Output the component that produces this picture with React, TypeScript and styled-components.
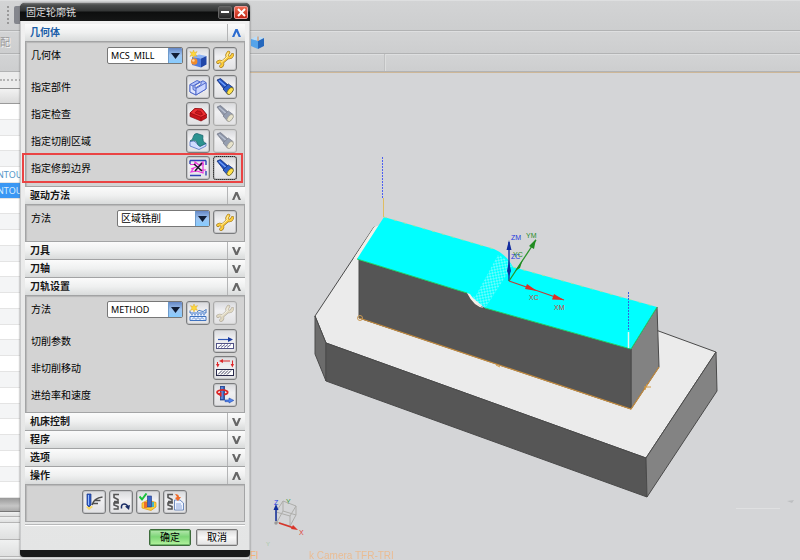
import React, { useId, useState } from "react";
import styled, { createGlobalStyle, css } from "styled-components";

const GlobalStyle = createGlobalStyle`
  * { box-sizing: border-box; }
  body {
    margin: 0;
    overflow: hidden;
    background: #d4d5d7;
    font-family: "Noto Sans", "Noto Sans CJK SC", sans-serif;
    font-size: 10px;
    line-height: 16px;
    color: #000;
  }
  button, select { font: inherit; color: inherit; margin: 0; padding: 0; }
`;

/* ---------- Application window behind the dialog ---------- */

const Page = styled.div`
  position: relative;
  display: flex;
  flex-direction: column;
  min-height: 100vh;
`;

const ToolbarRow = styled.div<{ $height: number }>`
  display: flex;
  align-items: center;
  height: ${(p) => p.$height}px;
  border-bottom: 1px solid #b2b3b4;
  background: linear-gradient(#d3d4d5, #cdcecf);
  box-shadow: inset 0 1px #dedfe0;
`;

const Grip = styled.span`
  width: 4px;
  height: 18px;
  margin: 0 3px 0 7px;
  border-left: 2px dotted #999;
`;

const DarkTool = styled.span`
  width: 18px;
  height: 18px;
  background: #84868d;
  border-radius: 2px;
`;

const FadedText = styled.span`
  width: 250px;
  color: #999;
  text-shadow: 1px 1px #f5f5f5;
`;

const RowDivider = styled.span`
  width: 1px;
  height: 17px;
  margin-left: 384px;
  background: #c0c1c2;
  box-shadow: 1px 0 #dcdddd;
`;

const Workspace = styled.div`
  display: flex;
  flex: 1;
`;

const Navigator = styled.aside`
  display: flex;
  flex-direction: column;
  width: 250px;
  background: #eceded;
  border-right: 1px solid #b5b6b8;
`;

const NavGrip = styled.div`
  height: 17px;
  border-bottom: 1px solid #8f8f8f;
  background: #ececec;
  &::before {
    content: "";
    display: block;
    margin-top: 7px;
    border-top: 2px dotted #b4b4b4;
  }
`;

const NavHead = styled.div`
  height: 15px;
  border-bottom: 1px solid #9a9a9a;
  background: linear-gradient(#f2f2f2, #dadada);
`;

const NavList = styled.ul`
  display: flex;
  flex: 1;
  flex-direction: column;
  margin: 0;
  padding: 0;
  list-style: none;
`;

const NavItem = styled.li<{ $selected: boolean }>`
  flex: 1;
  overflow: hidden;
  border-bottom: 1px solid #e4e4e4;
  background: #fff;
  color: #5597c8;
  font-size: 9px;
  text-indent: -3px;
  &:nth-child(even) { background: #f4f5f6; }
  ${(p) => p.$selected && css`
    && { background: #3a97f4; color: #d9edff; }
  `}
`;

const NavScroll = styled.div`
  height: 14px;
  border-bottom: 1px solid #777;
  background: linear-gradient(#999, #c6c6c6 60%, #aaa);
`;

const NavStrip = styled.div<{ $height: number }>`
  height: ${(p) => p.$height}px;
  border-bottom: 1px solid #b5b5b5;
  background: linear-gradient(#f0f1f1, #dfe0e0);
`;

const Viewport = styled.main`
  flex: 1;
  min-width: 0;
  overflow: hidden;
  background: #d4d5d7;
  border-top: 1px solid #cdb798;
`;

const SceneSvg = styled.svg`
  display: block;
  width: 550px;
  height: 487px;
`;

/* ---------- Dialog ---------- */

const Dialog = styled.section`
  position: absolute;
  left: 20px;
  top: 3px;
  width: 230px;
  border-radius: 5px 5px 4px 4px;
  background: #191a1a;
  box-shadow: 0 0 2px #666;
  overflow: hidden;
`;

const TitleBar = styled.header`
  display: flex;
  align-items: center;
  gap: 2px;
  height: 18px;
  padding: 0 2px 0 6px;
  background: linear-gradient(#777 0, #4c4e4e 2px, #333535 8px, #0d0e0e 9px, #151616);
  color: #ddd;
`;

const Title = styled.h1`
  flex: 1;
  margin: 0;
  font-size: 10px;
  font-weight: 400;
`;

const WindowButton = styled.button<{ $close?: boolean }>`
  display: grid;
  place-items: center;
  width: 14px;
  height: 13px;
  border: 1px solid ${(p) => (p.$close ? "#e99" : "#666")};
  border-radius: 2px;
  background: ${(p) => (p.$close ? "linear-gradient(#ef6a50, #c22616)" : "linear-gradient(#5a5a5a, #262626)")};
`;

const DialogBody = styled.div`
  margin-bottom: 7px;
  padding: 3px 4px 0;
  border: solid #c9cacb;
  border-width: 0 1px;
  background: linear-gradient(#f0f0f0, #e4e5e5);
`;

const SectionHeading = styled.h2`
  margin: 0;
  font-size: 10px;
`;

const SectionToggle = styled.button<{ $accent?: boolean }>`
  display: flex;
  width: 100%;
  height: 18px;
  border: 0;
  border-bottom: 1px solid #a2a3a4;
  background: linear-gradient(#fbfbfb, #eff0f0 50%, #d9dbdb);
  font-weight: 700;
  text-align: left;
  color: ${(p) => (p.$accent ? "#1b5ea8" : "#161616")};
`;

const SectionName = styled.span`
  flex: 1;
  padding-left: 5px;
`;

const ChevronCell = styled.span<{ $accent?: boolean }>`
  display: grid;
  place-items: center;
  width: 18px;
  height: 17px;
  border-left: 1px solid #b4b5b6;
  color: ${(p) => (p.$accent ? "#2c6cd0" : "#666")};
`;

const Panel = styled.div<{ $space: number }>`
  padding: 4px 7px ${(p) => p.$space}px 5px;
  border: 1px solid #a3a4a5;
  border-top: 0;
  background: #d3d3d3;
  box-shadow: inset 1px 1px 1px #b6b6b6;
`;

const Row = styled.div<{ $top?: boolean }>`
  position: relative;
  display: flex;
  align-items: ${(p) => (p.$top ? "flex-start" : "center")};
  gap: 3px;
  height: 27px;
  ${(p) => p.$top && css`padding-top: 1px;`}
`;

const RowLabel = styled.label`
  flex: 1;
  white-space: nowrap;
`;

const Highlight = styled.span`
  position: absolute;
  inset: -1px -6px -2px -9px;
  border: 2px solid #ea4444;
  pointer-events: none;
`;

const ComboBox = styled.span<{ $width: number }>`
  display: grid;
  grid-template-columns: 1fr 14px;
  width: ${(p) => p.$width}px;
  height: 17px;
  border: 1px solid #777;
  border-radius: 2px;
  overflow: hidden;
  background: #fff;
`;

const ComboSelect = styled.select<{ $small?: boolean }>`
  grid-area: 1 / 1 / 2 / 3;
  appearance: none;
  width: 100%;
  height: 15px;
  padding-left: 3px;
  border: 0;
  outline: 0;
  background: transparent;
  font-size: ${(p) => (p.$small ? 9 : 10)}px;
  line-height: 15px;
`;

const ComboArrow = styled.span`
  display: grid;
  place-items: center;
  grid-area: 1 / 2;
  border-left: 1px solid #6d9bcc;
  background: linear-gradient(#6486c4, #9fc4f0 50%, #86ccff);
  pointer-events: none;
`;

const ToolButton = styled.button`
  display: grid;
  place-items: center;
  flex: none;
  width: 24px;
  height: 24px;
  border: 1px solid #7b7c7e;
  border-radius: 3px;
  background: linear-gradient(#d8d9dc, #f0f0f2 40%, #e1e1e3);
  box-shadow: inset 0 0 0 1px #c5c6c8;
  &:disabled {
    border-color: #aaa;
    box-shadow: inset 0 0 0 1px #d5d5d5;
  }
  &:disabled svg { filter: grayscale(.7); opacity: .55; }
  &[data-focus="true"] { outline: 1px dotted #222; outline-offset: -1px; }
`;

const ActionBar = styled.div`
  display: flex;
  justify-content: center;
  gap: 3px;
  padding: 1px 0;
`;

const Footer = styled.footer`
  display: flex;
  justify-content: flex-end;
  gap: 5px;
  margin-top: 2px;
  padding: 4px 7px 4px 0;
  border-top: 1px solid #b8b9ba;
  box-shadow: inset 0 1px #fff;
`;

const FooterButton = styled.button<{ $primary?: boolean }>`
  width: 42px;
  height: 17px;
  border: 1px solid ${(p) => (p.$primary ? "#3c6b3a" : "#777")};
  border-radius: 2px;
  background: ${(p) => (p.$primary
    ? "linear-gradient(#b8e8b1, #7dd677 45%, #b4f39d)"
    : "linear-gradient(#dedede, #f8f8f8 50%, #e2e2e2)")};
  line-height: 15px;
  box-shadow: inset 0 0 0 1px ${(p) => (p.$primary ? "#70b86b" : "#c6c6c6")};
`;

/* ---------- Icons ---------- */

const Glyph = styled.svg.attrs({ viewBox: "0 0 18 18", "aria-hidden": true })`
  width: 18px;
  height: 18px;
`;

const Chevron = ({ up }: { up: boolean }) => (
  <svg width="9" height="8" viewBox="0 0 9 8" aria-hidden="true">
    <path d={up ? "M0 8 L3.4 0 H5.6 L9 8 H6.7 L4.5 3 L2.3 8Z" : "M0 0 L3.4 8 H5.6 L9 0 H6.7 L4.5 5 L2.3 0Z"} fill="currentColor" />
  </svg>
);

const Star = ({ x, y }: { x: number; y: number }) => (
  <path
    transform={`translate(${x} ${y})`}
    d="M0 -4 L1 -1.5 L3.6 -2.4 L2 0 L3.6 2.4 L1 1.5 L0 4 L-1 1.5 L-3.6 2.4 L-2 0 L-3.6 -2.4 L-1 -1.5Z"
    fill="#ffd83a" stroke="#d7a11c" strokeWidth=".4"
  />
);

const CubeIcon = () => (
  <Glyph>
    <path d="M3 7 L10 4.5 L17.5 6 L12 8.5Z" fill="#8db3f5" />
    <path d="M3 7 L12 8.5 V17.5 L3 15Z" fill="#4d7be0" />
    <path d="M12 8.5 L17.5 6 V14.5 L12 17.5Z" fill="#2146a8" />
    <circle cx="5.2" cy="11.5" r="3.2" fill="#ef8b2c" />
    <circle cx="4.4" cy="10.5" r="1.3" fill="#ffd49c" />
    <Star x={4.5} y={4} />
  </Glyph>
);

const WrenchIcon = () => {
  const d = "M12.5 2.5 Q10 5.5 12 7.2 Q15 8.6 16.5 4.8 M12 7.2 L6 12.5 M2 12.3 Q4 10.3 6 12.5 Q7.5 14.5 5 16.3";
  return (
    <Glyph fill="none" strokeLinecap="round" strokeLinejoin="round">
      <path d={d} stroke="#9a7420" strokeWidth="3.4" />
      <path d={d} stroke="#fbcb3c" strokeWidth="2.3" />
      <path d="M12 3 Q10.2 5.5 11.4 6.8 L5.5 11.8" stroke="#fff3b4" strokeWidth="1" />
    </Glyph>
  );
};

const PartIcon = () => (
  <Glyph stroke="#4862c6" strokeWidth=".9" strokeLinejoin="round">
    <path d="M1 6.5 L8 2.5 L11.5 4 L6 7.3 V10.2 L12 6.6 V3.8 L14 2.8 L17 4.5 V11 L7 17 L1 14Z" fill="#b3c3fa" />
    <path d="M1 6.5 L4 8 V11.5 L7 13 V17 L1 14Z" fill="#dfe6ff" />
    <path d="M7 10.5 L17 4.7 V11 L7 17Z" fill="#cbd6ff" />
    <path d="M4 8 L11 4" fill="none" />
  </Glyph>
);

const TorchIcon = () => (
  <Glyph>
    <path d="M1 2 L4.5 .5 L12 7 L8 11Z" fill="#1d4cbc" stroke="#173178" strokeWidth=".8" />
    <path d="M3 2.2 L10 8.4" stroke="#6c9cf8" strokeWidth="1.5" />
    <path d="M7 11 L12.3 6 L17 9.5 L11.5 16Z" fill="#2e62cd" stroke="#152e75" strokeWidth=".8" />
    <ellipse cx="14.2" cy="13" rx="2.3" ry="4.2" transform="rotate(40 14.2 13)" fill="#ffe24c" stroke="#64602e" strokeWidth=".8" />
  </Glyph>
);

const CheckBodyIcon = () => (
  <Glyph stroke="#8d0c11" strokeWidth=".7" strokeLinejoin="round">
    <path d="M1 8 L6 3.5 L13 4 L17.5 9.5 V13 L12 16 L1 11.5Z" fill="#c9151b" />
    <path d="M1 8 L6 3.5 L13 4 L17.5 9.5 L12 12.3Z" fill="#ec3134" />
    <path d="M6 7.8 L8 5.8 L11.5 6.2 L13.5 9.3 L11.5 10Z" fill="#cf151b" />
    <path d="M12 12.3 V16" />
  </Glyph>
);

const CutAreaIcon = () => (
  <Glyph strokeLinejoin="round">
    <path d="M1 9.5 V14 L10 17.5 L17 14 V11 L11 14 L5 9Z" fill="#cfddff" stroke="#5071c4" strokeWidth=".8" />
    <path d="M1 9 Q4 8 4.5 4 Q5.5 1.2 8 1.5 L14 3.5 Q13 10 17 11.5 L11 14.5 Q8 13 7.5 9.5 Q5 7.5 1 9Z" fill="#2c9390" stroke="#145f69" strokeWidth=".7" />
  </Glyph>
);

const TrimIcon = () => (
  <Glyph fill="none">
    <path d="M1 1.5 H17 M1 1.5 V5 M1 16.5 H12 M17 16.5 V12 M17 1.5 V6" stroke="#3042b7" strokeWidth="1.4" />
    <path d="M1 5.5 H6 V3 L10 6 L14 3 V14 L8 12 L2 13 L5 9 M2 10 L15 5 M10 11 H17" stroke="#ed31de" strokeWidth="1.2" />
    <path d="M5 5 L13 12 M13 4 L6 12" stroke="#181827" strokeWidth="1.5" />
  </Glyph>
);

const MethodIcon = () => (
  <Glyph fill="none">
    <path d="M1 8 H17 V16 H1Z" fill="#e9f1ff" />
    <path d="M1 6.5 V9 H17 V5 M1 12.5 H17 V16.5 H1Z" stroke="#3e72bf" />
    <path d="M8 8 Q10 5 12 7 Q14 8.5 16.5 6" stroke="#497dc5" />
    <path d="M2 10.8 H16" stroke="#5585cb" strokeDasharray="2 1" />
    <path d="M3 15.5 L5 13.5 L7 15.5 L9 13.5 L11 15.5 L13 13.5 L15 15.5" stroke="#5585cb" strokeWidth=".9" />
    <Star x={5} y={4} />
  </Glyph>
);

const Hatch = ({ y, h, color }: { y: number; h: number; color: string }) => (
  <>
    <rect x=".5" y={y} width="17" height={h} fill="#fff" stroke={color} />
    <path d={[2, 5, 8, 11].map((x) => `M${x} ${y + h - 1} L${x + 4} ${y + 1}`).join(" ")} stroke={color} strokeWidth=".9" />
  </>
);

const CutParamIcon = () => (
  <Glyph>
    <Hatch y={11.5} h={5} color="#515287" />
    <path d="M2 7.5 H13" stroke="#2e55b5" strokeWidth="1.2" />
    <path d="M12 5 L17 7.5 L12 10Z" fill="#1c3c9f" />
  </Glyph>
);

const NonCutIcon = () => (
  <Glyph>
    <Hatch y={10.5} h={6} color="#28294b" />
    <path d="M5 2 H14 M1.5 3 V6 M16.5 1.5 V6" stroke="#dd282b" strokeWidth="1.1" />
    <path d="M3 2 L7 0 V4Z M0 5 H3.5 L1.8 8.5Z M14.6 5 H18 L16.4 8.5Z" fill="#dd282b" />
  </Glyph>
);

const FeedIcon = () => (
  <Glyph>
    <rect x="4.5" y="0" width="4" height="14" fill="#365fb9" stroke="#153476" strokeWidth=".7" />
    <path d="M6 1 V13" stroke="#82adf3" />
    <path d="M3 8.3 Q-1 6 3 4.5 Q8 3 11.5 5.5 Q12.5 8 8 8.5" fill="none" stroke="#dc2626" strokeWidth="1.8" />
    <path d="M5.5 5.5 V11 L1.5 8.3Z" fill="#dc2626" />
    <path d="M9 14 H13 V12 L17.8 14.4 L13 17 V15.7 H9Z" fill="#4e83ef" stroke="#244caf" strokeWidth=".6" />
  </Glyph>
);

const GenerateIcon = () => (
  <Glyph>
    <path d="M1 14 L5 12 L8 14 L4 17Z" fill="#f8d865" />
    <path d="M2 1 H6 V12 L4 14 L2 12Z" fill="#315cc9" stroke="#193581" strokeWidth=".7" />
    <path d="M3.5 2 V12" stroke="#9bc0ff" />
    <path d="M7 12 Q9 5 17.5 4 M9 7.5 H15.5 M8 10.5 H13" fill="none" stroke="#505050" strokeWidth="1.7" />
  </Glyph>
);

const SquigglePath = () => (
  <path d="M7 1.5 H2 V4.5 L6 6.5 V8.5 H2 M7 10 H2 V12 L6 13.5 V16 H1.5" fill="none" stroke="#555" strokeWidth="1.6" />
);

const ReplayIcon = () => (
  <Glyph>
    <SquigglePath />
    <path d="M9.5 15.5 Q9 11 12 11 Q15 11 16 14" fill="none" stroke="#192c65" strokeWidth="1.5" />
    <path d="M13 13.5 L18 12 L17 17Z" fill="#192c65" />
  </Glyph>
);

const VerifyIcon = () => (
  <Glyph>
    <path d="M3 10 L9 7 L17 9.5 V14 L12 17.5 L3 15Z" fill="#ffcf38" stroke="#d89516" strokeWidth=".7" />
    <rect x="5" y="9" width="3" height="6" fill="#ed702a" />
    <rect x="13" y="9" width="2" height="5" fill="#43b4c5" />
    <rect x="8.5" y="3" width="4" height="11" fill="#3c66c9" stroke="#1b357f" strokeWidth=".6" />
    <path d="M0.5 3.5 L3 6.5 L7.5 .5" fill="none" stroke="#1bc13c" strokeWidth="2" />
  </Glyph>
);

const ListIcon = () => (
  <Glyph>
    <SquigglePath />
    <path d="M8.5 7 H14 L17.5 10 V17 H8.5Z" fill="#eef4ff" stroke="#5273b1" strokeWidth=".8" />
    <path d="M10 11 H15 M10 13 H16 M10 15 H16" stroke="#7897d4" strokeWidth=".8" />
    <path d="M9 1 Q13 1 13 4 L15 4 L12 8 L9 5 L11 4Z" fill="#ef6b2a" />
  </Glyph>
);

/* ---------- 3D view ---------- */

const Scene = () => (
  <SceneSvg viewBox="250 73 550 487" role="img" aria-label="加工模型">
    <defs>
      <pattern id="toolpath" width="4" height="4" patternUnits="userSpaceOnUse" patternTransform="rotate(-56)">
        <path d="M0 1 H2 M2 3 H4" stroke="#d9fbfb" strokeWidth=".9" />
      </pattern>
    </defs>
    <g stroke="#4a4a4a" strokeWidth="1" strokeLinejoin="round">
      <path d="M315 316 L374 227 L716 352 L646 458 L326 343Z" fill="#ebebeb" />
      <path d="M315 316 L326 343 V381 L315 354Z" fill="#6c6c6c" />
      <path d="M326 343 L646 458 L647 497 L326 381Z" fill="#565656" />
      <path d="M646 458 L716 352 L717 391 L647 497Z" fill="#838383" />
      <path d="M631 349 L657 307 L659 367 L631 409Z" fill="#828282" />
      <path d="M359 260 L467 293 Q475 306 485 308 L631 349 V409 L359 318Z" fill="#555" />
    </g>
    <path d="M374 227 L380 225 L358 260 L354 258Z" fill="#f2efe8" />
    <path d="M384 217 L494 249 Q506 254 513 267 L657 307 L631 349 L485 308 L467 293 L357 259Z" fill="#00ffff" />
    <path d="M475 297 L498 255 Q506 258 512 266 L486 307 Q478 306 472 296Z" fill="url(#toolpath)" />
    <path d="M470 294 Q476 304 484 308 Q474 307 467 293Z" fill="#f6eee7" />
    <path d="M357 259 L467 293 M485 308 L631 349 L657 307" fill="none" stroke="#21cf68" />
    <path d="M384 217 L494 249 M513 267 L657 307" fill="none" stroke="#a7e4a5" strokeDasharray="3 7" />
    <path d="M359 318 L631 409 L659 367" fill="none" stroke="#c68d3f" strokeWidth="1.2" />
    <path d="M644 387 L651 387 M647 384 L645 390 M496 365 L500 367" stroke="#d49b45" />
    <circle cx="360" cy="318" r="2.5" fill="none" stroke="#c99a56" />
    <path d="M382.5 157 V198" stroke="#4d5ff0" strokeDasharray="2 1" />
    <path d="M383.5 198 V217" stroke="#dfbd62" />
    <path d="M628.5 292 V331" stroke="#3360e0" strokeDasharray="2 1" />
    <path d="M628.5 332 V348" stroke="#e4f6ec" strokeWidth="1.5" />

    <g strokeWidth="1">
      <path d="M509 281 V242" stroke="#162e9c" strokeWidth="1.4" />
      <path d="M506.5 250 L509 240 L511.5 250Z M507 271 L509 261 L511 271 L509 276Z" fill="#102b9f" />
      <path d="M509 281 L536 240" stroke="#2b942b" strokeWidth="1.3" />
      <path d="M536 239 L534 249 L529 246Z M523 259 L520 268 L515 271Z" fill="#208b20" />
      <path d="M509 281 L564 300" stroke="#bf3d37" strokeWidth="1.3" />
      <path d="M564 300 L552 299.5 L554 294Z M537 291 L525 289 L527 284Z" fill="#dc2e26" />
    </g>
    <g fontFamily="Liberation Sans, sans-serif" fontSize="7">
      <text x="511" y="240" fill="#1c36df">ZM</text>
      <text x="526" y="238" fill="#258d29">YM</text>
      <text x="511" y="259" fill="#1c36df">ZC</text>
      <text x="513" y="257" fill="#258d29">YC</text>
      <text x="529" y="300" fill="#db3b34">XC</text>
      <text x="554" y="310" fill="#db3b34">XM</text>
      <text x="274" y="505" fill="#2741e8">Z</text>
      <text x="286" y="504" fill="#3a993a">Y</text>
      <text x="299" y="535" fill="#df3d37">X</text>
    </g>
    <g fill="none" stroke="#adadaa">
      <path d="M276 512 L283 501 L296 506 V515 L290 526 L277 522Z M276 512 L290 516 L296 506 M290 516 V526 M283 501 V511 L296 515 M283 511 L277 522" />
    </g>
    <path d="M276 521 V507" stroke="#102c9b" strokeWidth="1.5" />
    <path d="M273.5 510 L276 504 L278.5 510Z" fill="#102c9b" />
    <path d="M279 523 L294 528" stroke="#d93429" strokeWidth="1.7" />
    <path d="M298 530 L291 529 L293 525Z" fill="#d93429" />
    <circle cx="276" cy="523" r="1.7" fill="#999" />
    <g fontFamily="Liberation Sans, sans-serif" fontSize="10" fill="#f3b277">
      <text x="250" y="559">Fl</text>
      <text x="309" y="559" opacity=".7">k Camera TFR-TRI</text>
      <text x="266" y="546" fontSize="6" fill="#a8caa9">Y</text>
    </g>
    <path d="M736 508.5 H780" stroke="#dfe0e1" />
    <path d="M787 501 L794 500 L792 503Z" fill="#bdbfc1" />
  </SceneSvg>
);

/* ---------- Dialog parts ---------- */

type SectionProps = { name: string; accent?: boolean; open?: boolean; space?: number; children?: React.ReactNode };

const Section = ({ name, accent, open: initial = false, space = 5, children }: SectionProps) => {
  const [open, setOpen] = useState(initial);
  return (
    <>
      <SectionHeading>
        <SectionToggle type="button" $accent={accent} aria-expanded={open} onClick={() => setOpen(!open)}>
          <SectionName>{name}</SectionName>
          <ChevronCell $accent={accent}><Chevron up={open} /></ChevronCell>
        </SectionToggle>
      </SectionHeading>
      {open && children && <Panel $space={space}>{children}</Panel>}
    </>
  );
};

type Tool = { title: string; icon: React.ReactNode; disabled?: boolean; focus?: boolean };

const Tools = ({ items }: { items: Tool[] }) => (
  <>
    {items.map((t) => (
      <ToolButton key={t.title} type="button" aria-label={t.title} disabled={t.disabled} data-focus={!!t.focus}>
        {t.icon}
      </ToolButton>
    ))}
  </>
);

type FieldProps = { label: string; value: string; width: number; small?: boolean; tools: Tool[] };

const ComboRow = ({ label, value, width, small, tools }: FieldProps) => {
  const id = useId();
  return (
    <Row $top>
      <RowLabel htmlFor={id}>{label}</RowLabel>
      <ComboBox $width={width}>
        <ComboArrow>
          <svg width="9" height="6" viewBox="0 0 9 6" aria-hidden="true"><path d="M0 0 H9 L4.5 6Z" fill="#111d35" /></svg>
        </ComboArrow>
        <ComboSelect id={id} $small={small} defaultValue={value}>
          <option>{value}</option>
        </ComboSelect>
      </ComboBox>
      <Tools items={tools} />
    </Row>
  );
};

const ToolRow = ({ label, tools, marked }: { label: string; tools: Tool[]; marked?: boolean }) => (
  <Row>
    <RowLabel as="span">{label}</RowLabel>
    <Tools items={tools} />
    {marked && <Highlight />}
  </Row>
);

const navItems = Array.from({ length: 25 }, (_, i) => (i === 4 || i === 5 ? "NTOUR" : ""));

export default function App() {
  return (
    <Page>
      <GlobalStyle />
      <ToolbarRow $height={31}><Grip /><DarkTool /></ToolbarRow>
      <ToolbarRow $height={23}>
        <FadedText>配</FadedText>
        <svg width="15" height="15" viewBox="0 0 15 15" aria-hidden="true">
          <path d="M1 4 L7 1 L14 3 L8 6Z" fill="#b9dcf8" />
          <path d="M1 4 L8 6 V14 L1 11Z" fill="#56a4ea" />
          <path d="M8 6 L14 3 V11 L8 14Z" fill="#2568bd" />
          <path d="M8 6 V1.5" stroke="#e6863c" />
        </svg>
      </ToolbarRow>
      <ToolbarRow $height={18}><RowDivider /></ToolbarRow>
      <Workspace>
        <Navigator>
          <NavGrip />
          <NavHead />
          <NavList>
            {navItems.map((text, i) => <NavItem key={i} $selected={i === 5}>{text}</NavItem>)}
          </NavList>
          <NavScroll />
          <NavStrip $height={5} />
          <NavStrip $height={6} />
          <NavStrip $height={17} />
          <NavStrip $height={17} />
          <NavStrip $height={3} />
        </Navigator>
        <Viewport><Scene /></Viewport>
      </Workspace>

      <Dialog role="dialog" aria-labelledby="dialog-title">
        <TitleBar>
          <Title id="dialog-title">固定轮廓铣</Title>
          <WindowButton type="button" aria-label="最小化">
            <svg width="8" height="3" aria-hidden="true"><path d="M0 1 H8" stroke="#fff" strokeWidth="2" /></svg>
          </WindowButton>
          <WindowButton type="button" aria-label="关闭" $close>
            <svg width="9" height="9" viewBox="0 0 9 9" aria-hidden="true"><path d="M1 1 L8 8 M8 1 L1 8" stroke="#fff" strokeWidth="2" /></svg>
          </WindowButton>
        </TitleBar>
        <DialogBody>
          <Section name="几何体" accent open>
            <ComboRow label="几何体" value="MCS_MILL" width={76} small tools={[
              { title: "新建几何体", icon: <CubeIcon /> },
              { title: "编辑几何体", icon: <WrenchIcon /> },
            ]} />
            <ToolRow label="指定部件" tools={[
              { title: "选择部件", icon: <PartIcon /> },
              { title: "显示部件", icon: <TorchIcon /> },
            ]} />
            <ToolRow label="指定检查" tools={[
              { title: "选择检查", icon: <CheckBodyIcon /> },
              { title: "显示检查", icon: <TorchIcon />, disabled: true },
            ]} />
            <ToolRow label="指定切削区域" tools={[
              { title: "选择切削区域", icon: <CutAreaIcon /> },
              { title: "显示切削区域", icon: <TorchIcon />, disabled: true },
            ]} />
            <ToolRow label="指定修剪边界" marked tools={[
              { title: "选择修剪边界", icon: <TrimIcon /> },
              { title: "显示修剪边界", icon: <TorchIcon />, focus: true },
            ]} />
          </Section>
          <Section name="驱动方法" open>
            <ComboRow label="方法" value="区域铣削" width={93} tools={[{ title: "编辑驱动方法", icon: <WrenchIcon /> }]} />
          </Section>
          <Section name="刀具" />
          <Section name="刀轴" />
          <Section name="刀轨设置" open space={4}>
            <ComboRow label="方法" value="METHOD" width={76} small tools={[
              { title: "新建方法", icon: <MethodIcon /> },
              { title: "编辑方法", icon: <WrenchIcon />, disabled: true },
            ]} />
            <ToolRow label="切削参数" tools={[{ title: "编辑切削参数", icon: <CutParamIcon /> }]} />
            <ToolRow label="非切削移动" tools={[{ title: "编辑非切削移动", icon: <NonCutIcon /> }]} />
            <ToolRow label="进给率和速度" tools={[{ title: "编辑进给率和速度", icon: <FeedIcon /> }]} />
          </Section>
          <Section name="机床控制" />
          <Section name="程序" />
          <Section name="选项" />
          <Section name="操作" open space={6}>
            <ActionBar>
              <Tools items={[
                { title: "生成", icon: <GenerateIcon /> },
                { title: "重播", icon: <ReplayIcon /> },
                { title: "确认", icon: <VerifyIcon /> },
                { title: "列表", icon: <ListIcon /> },
              ]} />
            </ActionBar>
          </Section>
          <Footer>
            <FooterButton type="button" $primary>确定</FooterButton>
            <FooterButton type="button">取消</FooterButton>
          </Footer>
        </DialogBody>
      </Dialog>
    </Page>
  );
}
